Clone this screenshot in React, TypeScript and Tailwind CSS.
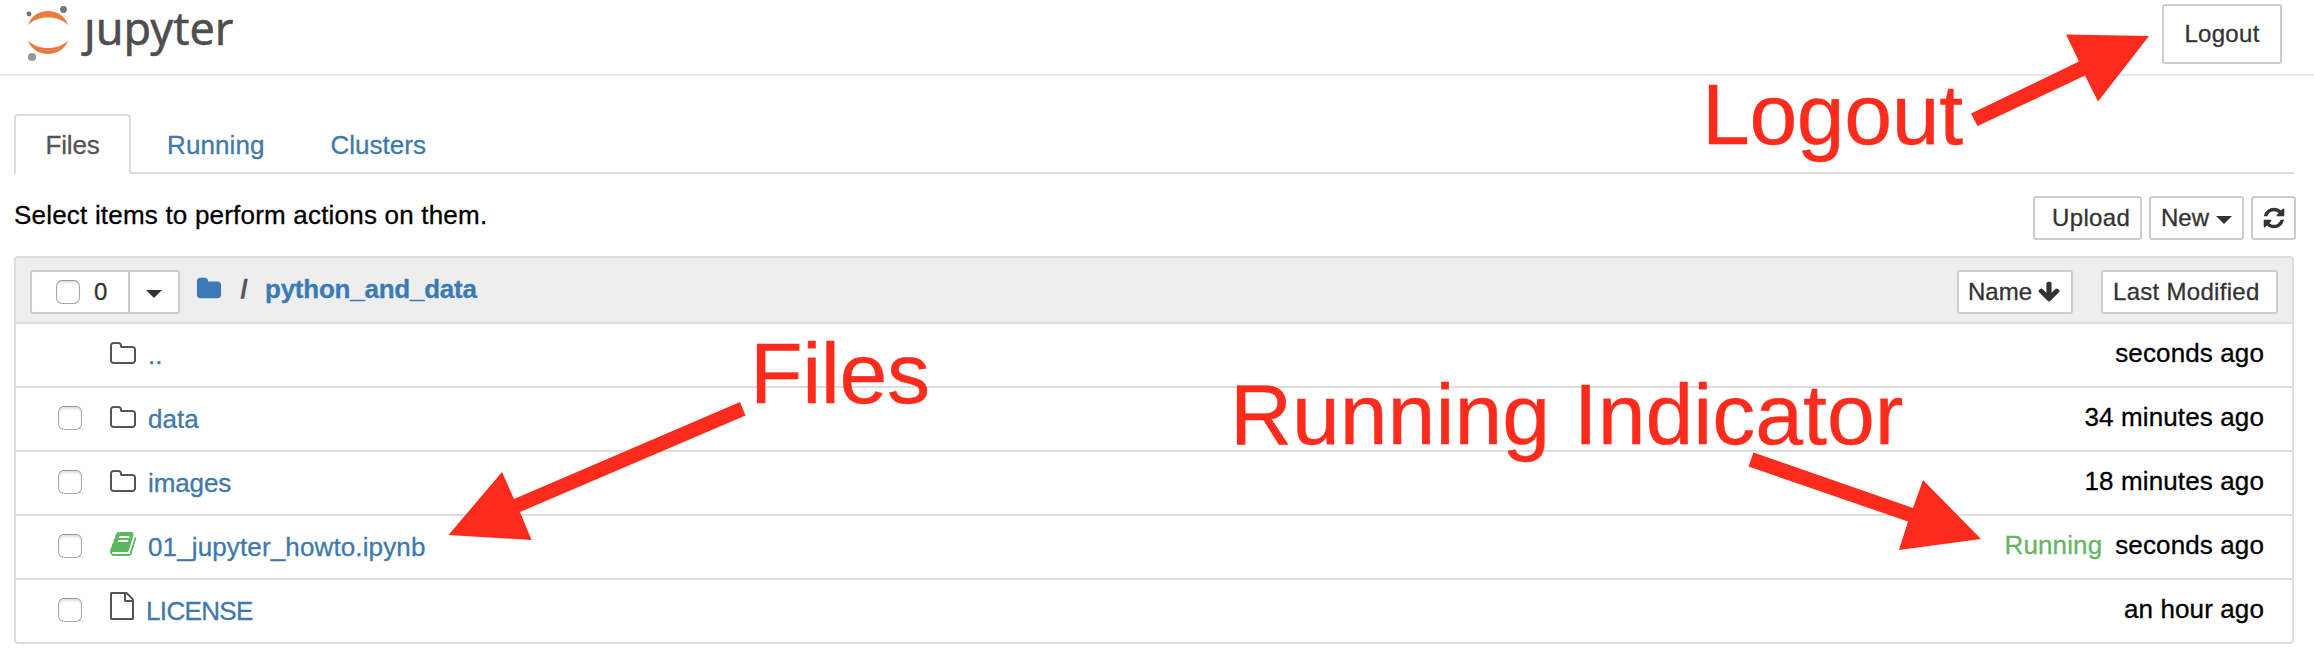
import React from "react";

const PATHS = {
  folderOpen:
    "M1600 1312V608q0-40-28-68t-68-28H800q-40 0-68-28t-28-68v-64q0-40-28-68t-68-28H288q-40 0-68 28t-28 68v960q0 40 28 68t68 28h1216q40 0 68-28t28-68zm128-704v704q0 92-66 158t-158 66H288q-92 0-158-66t-66-158V352q0-92 66-158t158-66h320q92 0 158 66t66 158v32h672q92 0 158 66t66 158z",
  folder:
    "M1728 608v704q0 92-66 158t-158 66H288q-92 0-158-66t-66-158V352q0-92 66-158t158-66h320q92 0 158 66t66 158v32h672q92 0 158 66t66 158z",
  file: "M1596 380q28 28 48 76t20 88v1152q0 40-28 68t-68 28H224q-40 0-68-28t-28-68V96q0-40 28-68t68-28h896q40 0 88 20t76 48zm-444-244v376h376q-10-29-22-41l-313-313q-12-12-41-22zm384 1528V640h-416q-40 0-68-28t-28-68V128H256v1536h1280z",
  book: "M1703 478q40 57 18 129l-275 906q-19 64-76.5 107.5T1247 1664H324q-77 0-148.5-53.5T76 1479q-24-67-2-127 0-4 3-27t4-37q1-8-3-21.5t-3-19.5q2-11 8-21t16.5-23.5T116 1179q23-38 45-91.5t30-91.5q3-10 .5-30t-.5-28q3-11 17-28t17-23q21-36 42-92t25-90q1-9-2.5-32t.5-28q4-13 22-30.5t22-22.5q19-26 42.5-84.5T404 411q1-8-3-25.5t-2-26.5q2-8 9-18t18-23 17-21q8-12 16.5-30.5t15-35 16-36 19.5-32T538 139.5t36-11.5 47.5 5.5l-1 3q38-9 51-9h761q74 0 114 56t18 130l-274 906q-36 119-71.5 153.5T1091 1408H222q-27 0-38 15-11 16-1 43 24 70 144 70h923q29 0 56-15.5t35-41.5l300-987q7-22 5-57 38 15 59 43zm-1064 2q-4 13 2 22.5t20 9.5h608q13 0 25.5-9.5T1311 480l21-64q4-13-2-22.5t-20-9.5H702q-13 0-25.5 9.5T660 416zm-83 256q-4 13 2 22.5t20 9.5h608q13 0 25.5-9.5T1228 736l21-64q4-13-2-22.5t-20-9.5H619q-13 0-25.5 9.5T577 672z",
  refresh:
    "M1639 1056q0 5-1 7-64 268-268 434.5T892 1664q-146 0-282.5-55T366 1452l-129 129q-19 19-45 19t-45-19-19-45v-448q0-26 19-45t45-19h448q26 0 45 19t19 45-19 45l-137 137q71 66 161 102t187 36q134 0 250-65t186-179q11-17 53-117 8-23 30-23h192q13 0 22.5 9.5t9.5 22.5zm25-800v448q0 26-19 45t-45 19h-448q-26 0-45-19t-19-45 19-45l138-138Q1097 384 896 384q-134 0-250 65T460 628q-11 17-53 117-8 23-30 23H178q-13 0-22.5-9.5T146 736v-7q65-268 270-434.5T896 128q146 0 284 55.5T1425 340l130-129q19-19 45-19t45 19 19 45z",
  arrowDown:
    "M1675 832q0 53-37 90l-651 652q-39 37-91 37-53 0-90-37L155 922q-38-36-38-90 0-53 38-91l74-75q39-37 91-37 53 0 90 37l294 294V256q0-52 38-90t90-38h128q52 0 90 38t38 90v704l294-294q37-37 90-37 52 0 91 37l75 75q37 39 37 91z",
};

function Icon({ name, className }: { name: keyof typeof PATHS; className: string }) {
  return (
    <svg viewBox="0 0 1792 1792" fill="currentColor" className={`shrink-0 ${className}`}>
      <path d={PATHS[name]} />
    </svg>
  );
}

function Caret() {
  return (
    <svg viewBox="0 0 16 8" fill="currentColor" className="h-2 w-4 shrink-0">
      <path d="M0 0h16L8 8z" />
    </svg>
  );
}

function Checkbox() {
  return (
    <span className="block size-6 shrink-0 rounded-[6px] border border-[#a9a9a9] border-t-[#969696] bg-white shadow-[inset_0_2px_2px_rgba(0,0,0,0.12)]" />
  );
}

function Logo() {
  return (
    <div className="flex h-[74px] items-start">
      <svg viewBox="22 0 50 66" className="ml-[22px] h-[66px] w-[50px] shrink-0">
        <path d="M28 25C31 16 39 11 48 11s17 5 20 14C63 20 56 17.500 48 17.500s-15 2.500-20 7.500z" fill="#e97c3d" />
        <path d="M28 40.500C31 49 39 54 48 54s17-5 20-13.500C63 45.500 56 48 48 48s-15-2.500-20-7.500z" fill="#e97c3d" />
        <circle cx="29" cy="14" r="2.400" fill="#6f6f6f" />
        <circle cx="63.500" cy="9.500" r="3.400" fill="#767676" />
        <circle cx="32" cy="57" r="4.100" fill="#969696" />
      </svg>
      <div className="ml-[12px] flex font-['Noto_Sans',sans-serif] text-[45px] leading-[55px] text-[#4e4e4e] [-webkit-text-stroke:0.5px_#4e4e4e]">
        <span className="[clip-path:inset(17px_-10px_-10px_-10px)]">j</span>
        <span>upyter</span>
      </div>
    </div>
  );
}

const BTN = "flex h-11 items-center rounded-[3px] border-2 border-[#ccc] bg-white text-2xl text-[#333]";

type Entry = {
  name: string;
  icon: "folderOpen" | "book" | "file";
  iconClass: string;
  nameClass: string;
  modified: string;
  parent?: boolean;
  running?: boolean;
};

const FOLDER = "mb-0.5 text-[#555]";

const ENTRIES: Entry[] = [
  { name: "..", icon: "folderOpen", iconClass: FOLDER, nameClass: "ml-[11px]", modified: "seconds ago", parent: true },
  { name: "data", icon: "folderOpen", iconClass: FOLDER, nameClass: "ml-[11px]", modified: "34 minutes ago" },
  { name: "images", icon: "folderOpen", iconClass: FOLDER, nameClass: "ml-[11px] tracking-[-0.1px]", modified: "18 minutes ago" },
  {
    name: "01_jupyter_howto.ipynb",
    icon: "book",
    iconClass: "mb-1.5 text-[#5cb85c]",
    nameClass: "ml-[11px] tracking-[0.13px]",
    modified: "seconds ago",
    running: true,
  },
  {
    name: "LICENSE",
    icon: "file",
    iconClass: "mb-[10px] -ml-px mr-px text-[#555]",
    nameClass: "ml-[9px] tracking-[-0.65px]",
    modified: "an hour ago",
  },
];

function Row({ entry }: { entry: Entry }) {
  return (
    <div className="flex h-16 items-center border-t-2 border-[#ddd] pr-[29px] pl-[42px]">
      <div className="mb-0.5 w-[51px]">{!entry.parent && <Checkbox />}</div>
      <div className={entry.iconClass}>
        <Icon name={entry.icon} className="size-7" />
      </div>
      <a className={`text-[#4079ab] ${entry.nameClass}`}>{entry.name}</a>
      <div className="-mr-px mb-1 ml-auto flex gap-[13px] tracking-[0.12px] text-black">
        {entry.running && <span className="text-[#65b565]">Running</span>}
        <span>{entry.modified}</span>
      </div>
    </div>
  );
}

const NOTE =
  "absolute whitespace-nowrap text-[86px] leading-none text-[#fc2b1c] [-webkit-text-stroke:0.4px_#fc2b1c]";

export default function App() {
  return (
    <div className="relative h-[660px] w-[2314px] overflow-hidden bg-white font-['Liberation_Sans',Arial,sans-serif] text-[26px] leading-[36px] text-black [-webkit-text-stroke:0.3px_currentColor]">
      <header className="flex h-[76px] items-start justify-between border-b-2 border-[#e7e7e7]">
        <Logo />
        <button className="mt-1 mr-8 h-[60px] w-[120px] rounded-[3px] border-2 border-[#ccc] bg-white text-2xl tracking-[0.3px] text-[#333]">
          Logout
        </button>
      </header>

      <main className="mr-5 ml-[14px] flex flex-col pt-[38px]">
        <nav className="flex h-[60px] border-b-2 border-[#ddd]">
          <a className="flex h-[60px] w-[117px] items-center justify-center rounded-t-[4px] border-2 border-b-0 border-[#ddd] bg-white tracking-[-0.2px] text-[#555]">
            Files
          </a>
          <a className="ml-[36px] flex items-center pt-1 tracking-[0.1px] text-[#4079ab]">Running</a>
          <a className="ml-[66px] flex items-center pt-1 text-[#4079ab]">Clusters</a>
        </nav>

        <div className="-mr-0.5 flex h-[82px] items-start pt-[22px]">
          <p className="mt-px tracking-[0.2px]">Select items to perform actions on them.</p>
          <div className="ml-auto flex gap-[7px]">
            <button className={`${BTN} w-[109px] pl-[17px] tracking-[0.35px]`}>Upload</button>
            <button className={`${BTN} w-[95px] gap-[7px] pl-2.5`}>
              New
              <span className="mt-1">
                <Caret />
              </span>
            </button>
            <button className={`${BTN} w-[45px] justify-center`}>
              <Icon name="refresh" className="size-6" />
            </button>
          </div>
        </div>

        <section className="h-[388px] overflow-hidden rounded-[4px] border-2 border-[#ddd]">
          <div className="flex h-16 items-start bg-[#eee] pt-3 pr-[14px] pl-[14px]">
            <div className={`${BTN} w-[150px]`}>
              <div className="flex h-full w-[98px] items-center border-r-2 border-[#ccc] pl-6">
                <Checkbox />
                <span className="ml-[14px]">0</span>
              </div>
              <span className="mt-1 ml-4">
                <Caret />
              </span>
            </div>
            <div className="mt-px flex items-center font-bold">
              <Icon name="folder" className="ml-4 size-[26px] text-[#3a7ab5]" />
              <span className="ml-[16px] w-[12px] text-center text-[#555]">/</span>
              <a className="ml-[15px] tracking-[-0.24px] text-[#3a7ab5]">python_and_data</a>
            </div>
            <div className="ml-auto flex gap-7">
              <button className={`${BTN} w-[116px] gap-[5px] pl-[9px]`}>
                Name
                <Icon name="arrowDown" className="size-6" />
              </button>
              <button className={`${BTN} w-[177px] pl-2.5 tracking-[0.3px]`}>Last Modified</button>
            </div>
          </div>
          {ENTRIES.map((entry) => (
            <Row key={entry.name} entry={entry} />
          ))}
        </section>
      </main>

      <svg viewBox="0 0 2314 660" fill="#fc2b1c" className="pointer-events-none absolute inset-0 h-[660px] w-[2314px]">
        <path d="M448.500 535L502 472L514 499L740 402L745.500 415.500L520 512L531.500 540z" />
        <path d="M2149 36L2066 34.500L2079 61.500L1971 113.500L1977.500 126L2085 75.500L2098 101.500z" />
        <path d="M1981 539L1923 480L1913 508L1753.500 452.500L1748.500 466.500L1908 521.500L1899 550z" />
      </svg>
      <span className={`${NOTE} top-[71px] left-[1702px] tracking-[-0.4px]`}>Logout</span>
      <span className={`${NOTE} top-[330px] left-[750px] tracking-[-0.4px]`}>Files</span>
      <span className={`${NOTE} top-[371px] left-[1230px] tracking-[-0.05px]`}>Running Indicator</span>
    </div>
  );
}
